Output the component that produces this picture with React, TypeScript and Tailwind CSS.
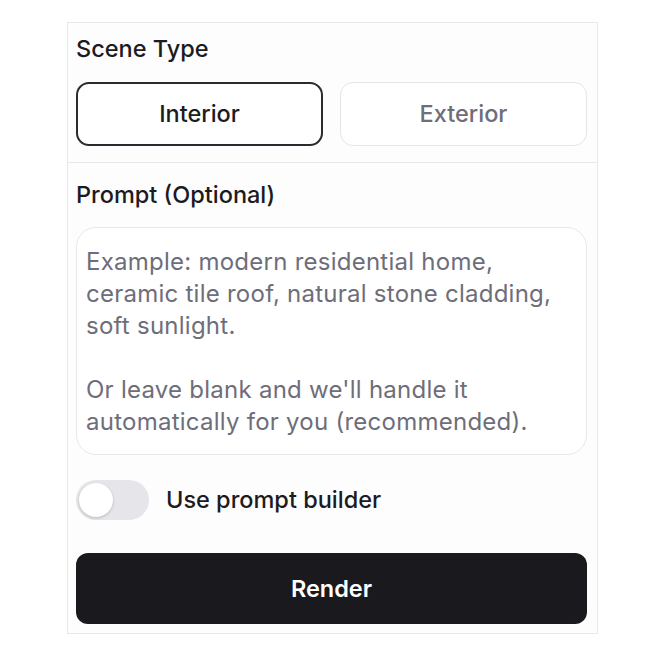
import React from "react";

export default function App() {
  return (
    <div className="w-[662px] h-[658px] bg-white pt-[22px] pl-[67px]" style={{ fontFamily: "Inter, 'Noto Sans', sans-serif" }}>
      <div className="w-[531px] h-[612px] border border-[#e9e7ec] bg-[#fefdfe] flex flex-col">
        <div className="pl-[8px] pr-[10px] pt-[12px] pb-[16px] border-b border-[#e9e7ec] flex flex-col gap-[19px]">
          <div className="text-[23.5px] leading-[28px] font-medium text-[#1c1b20]">Scene Type</div>
          <div className="grid grid-cols-2 gap-[17px]">
            <button className="h-[64px] rounded-[13px] border-2 border-[#2b2a30] bg-white text-[23.5px] font-medium text-[#1c1b20]">
              Interior
            </button>
            <button className="h-[64px] rounded-[13px] border border-[#e6e4ea] bg-white text-[23.5px] font-medium text-[#6e6d7a]">
              Exterior
            </button>
          </div>
        </div>
        <div className="pl-[8px] pr-[10px] pt-[18px] flex flex-col">
          <div className="text-[23.5px] leading-[28px] font-medium text-[#1c1b20]">Prompt (Optional)</div>
          <textarea
            className="mt-[18px] h-[228px] w-full resize-none rounded-[20px] border border-[#e9e7ec] bg-white px-[9px] pt-[18px] pb-[15px] text-[24px] tracking-[0.25px] leading-[32px] text-[#1c1b20] placeholder:text-[#6e6d7a] outline-none"
            placeholder={
              "Example: modern residential home,\nceramic tile roof, natural stone cladding,\nsoft sunlight.\n\nOr leave blank and we'll handle it\nautomatically for you (recommended)."
            }
          />
          <div className="mt-[25px] flex items-center gap-[17px] h-[40px]">
            <div className="w-[73px] h-[40px] rounded-full bg-[#e6e5ea] p-[3px] flex items-center">
              <div className="w-[34px] h-[34px] rounded-full bg-white shadow-[0_1px_3px_rgba(0,0,0,0.2)]" />
            </div>
            <span className="text-[23.5px] font-medium text-[#1c1b20]">Use prompt builder</span>
          </div>
          <button className="mt-[33px] h-[71px] w-full rounded-[12px] bg-[#1a191e] text-white text-[23.5px] font-semibold">
            Render
          </button>
        </div>
      </div>
    </div>
  );
}
